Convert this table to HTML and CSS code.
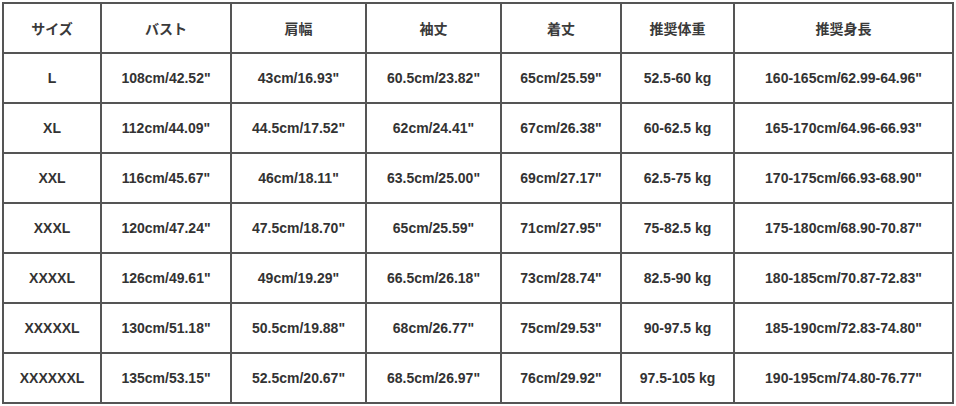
FILE: index.html
```html
<!DOCTYPE html>
<html lang="ja">
<head>
<meta charset="utf-8">
<title>サイズ表</title>
<link rel="stylesheet" href="styles.css">
</head>
<body>
<table class="size-table">
  <colgroup>
    <col class="c1"><col class="c2"><col class="c3"><col class="c4"><col class="c5"><col class="c6"><col class="c7">
  </colgroup>
  <thead>
    <tr><th>サイズ</th><th>バスト</th><th>肩幅</th><th>袖丈</th><th>着丈</th><th>推奨体重</th><th>推奨身長</th></tr>
  </thead>
  <tbody>
    <tr><td>L</td><td>108cm/42.52"</td><td>43cm/16.93"</td><td>60.5cm/23.82"</td><td>65cm/25.59"</td><td>52.5-60 kg</td><td>160-165cm/62.99-64.96"</td></tr>
    <tr><td>XL</td><td>112cm/44.09"</td><td>44.5cm/17.52"</td><td>62cm/24.41"</td><td>67cm/26.38"</td><td>60-62.5 kg</td><td>165-170cm/64.96-66.93"</td></tr>
    <tr><td>XXL</td><td>116cm/45.67"</td><td>46cm/18.11"</td><td>63.5cm/25.00"</td><td>69cm/27.17"</td><td>62.5-75 kg</td><td>170-175cm/66.93-68.90"</td></tr>
    <tr><td>XXXL</td><td>120cm/47.24"</td><td>47.5cm/18.70"</td><td>65cm/25.59"</td><td>71cm/27.95"</td><td>75-82.5 kg</td><td>175-180cm/68.90-70.87"</td></tr>
    <tr><td>XXXXL</td><td>126cm/49.61"</td><td>49cm/19.29"</td><td>66.5cm/26.18"</td><td>73cm/28.74"</td><td>82.5-90 kg</td><td>180-185cm/70.87-72.83"</td></tr>
    <tr><td>XXXXXL</td><td>130cm/51.18"</td><td>50.5cm/19.88"</td><td>68cm/26.77"</td><td>75cm/29.53"</td><td>90-97.5 kg</td><td>185-190cm/72.83-74.80"</td></tr>
    <tr><td>XXXXXXL</td><td>135cm/53.15"</td><td>52.5cm/20.67"</td><td>68.5cm/26.97"</td><td>76cm/29.92"</td><td>97.5-105 kg</td><td>190-195cm/74.80-76.77"</td></tr>
  </tbody>
</table>
</body>
</html>
```
FILE: styles.css
```css
html, body {
  margin: 0;
  padding: 0;
  background: #ffffff;
}
body {
  padding: 2px 0 0 2px;
  font-family: "Liberation Sans", Arial, "Noto Sans CJK JP", sans-serif;
  color: #333333;
}
.size-table {
  border-collapse: collapse;
  table-layout: fixed;
  width: 952px;
  border: 2px solid #555555;
}
.c1 { width: 98px; }
.c2 { width: 130px; }
.c3 { width: 135px; }
.c4 { width: 135px; }
.c5 { width: 120px; }
.c6 { width: 113px; }
.c7 { width: 219px; }
.size-table th,
.size-table td {
  border: 2px solid #555555;
  height: 48px;
  padding: 0;
  text-align: center;
  vertical-align: middle;
  font-size: 14px;
  line-height: 18px;
  font-weight: bold;
  white-space: nowrap;
}
.size-table th {
  font-family: "Noto Sans CJK JP", sans-serif;
  font-size: 14px;
  font-weight: 700;
  color: #3a3a3a;
  line-height: 16px;
}
```
